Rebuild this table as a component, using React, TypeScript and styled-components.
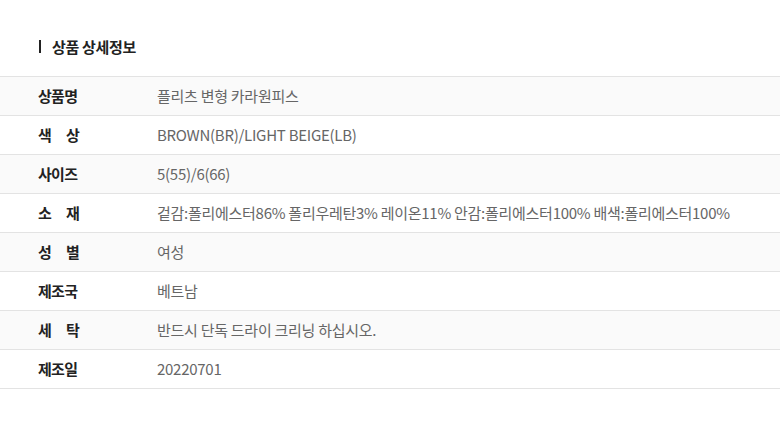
import React from 'react'
import styled, { createGlobalStyle } from 'styled-components'

const GlobalStyle = createGlobalStyle`
  body {
    margin: 0;
    background: #fff;
    font-family: 'Noto Sans CJK KR', 'Noto Sans', sans-serif;
  }
`

const rows = [
  { label: '상품명', value: '플리츠 변형 카라원피스' },
  { label: '색상', value: 'BROWN(BR)/LIGHT BEIGE(LB)' },
  { label: '사이즈', value: '5(55)/6(66)' },
  {
    label: '소재',
    value:
      '겉감:폴리에스터86% 폴리우레탄3% 레이온11% 안감:폴리에스터100% 배색:폴리에스터100%'
  },
  { label: '성별', value: '여성' },
  { label: '제조국', value: '베트남' },
  { label: '세탁', value: '반드시 단독 드라이 크리닝 하십시오.' },
  { label: '제조일', value: '20220701' }
]

const Page = styled.div`
  width: 780px;
  padding-top: 37px;
`

const Title = styled.h2`
  display: flex;
  align-items: center;
  gap: 11px;
  margin: 0 0 20px 39px;
  height: 19px;
  font-size: 15px;
  font-weight: 700;
  color: #222;
  letter-spacing: -0.3px;

  &::before {
    content: '';
    width: 2px;
    height: 13px;
    background: #222;
  }
`

const Table = styled.div`
  border-top: 1px solid #e3e3e3;
`

const Row = styled.div<{ $shade: boolean }>`
  display: flex;
  align-items: center;
  box-sizing: border-box;
  height: 39px;
  padding-bottom: 2px;
  border-bottom: 1px solid #e3e3e3;
  background: ${(p) => (p.$shade ? '#fafafa' : '#fff')};
`

const Label = styled.div`
  width: 41px;
  margin-left: 38px;
  margin-right: 78px;
  font-size: 15px;
  font-weight: 700;
  color: #222;
  letter-spacing: -0.7px;
  text-align: justify;
  text-align-last: justify;
  white-space: nowrap;
`

const Value = styled.div`
  font-size: 15px;
  font-weight: 400;
  color: #666;
  letter-spacing: -0.27px;
  white-space: nowrap;
`

export default function App() {
  return (
    <Page>
      <GlobalStyle />
      <Title>상품 상세정보</Title>
      <Table>
        {rows.map((r, i) => (
          <Row key={r.label} $shade={i % 2 === 0}>
            <Label>{r.label.length === 2 ? r.label.split('').join(' ') : r.label}</Label>
            <Value>{r.value}</Value>
          </Row>
        ))}
      </Table>
    </Page>
  )
}
